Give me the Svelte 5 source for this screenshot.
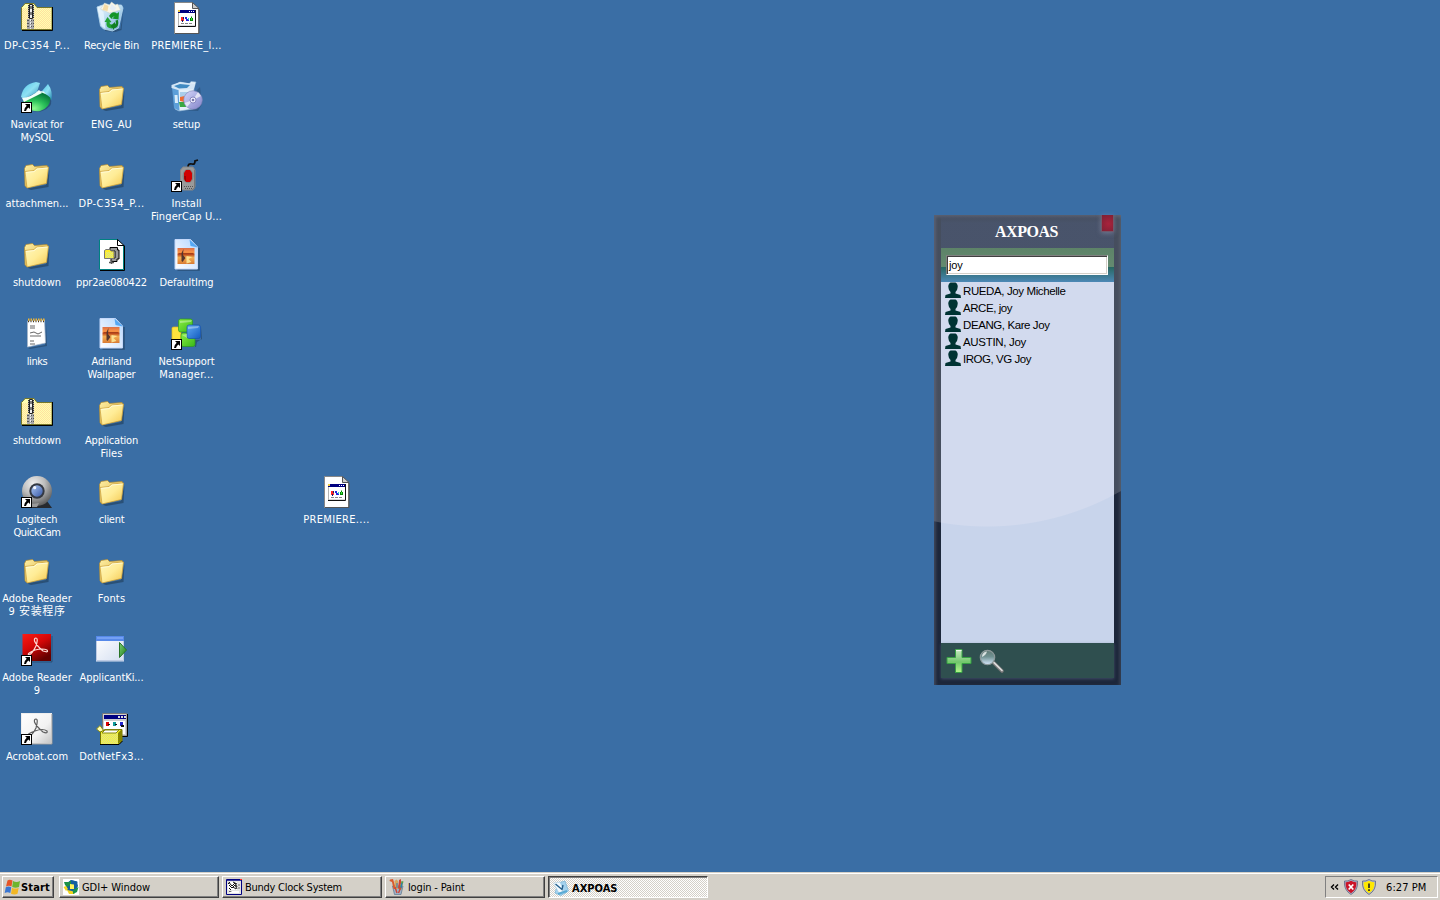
<script>
  const columns = [
    [
      { icon: 'zip', lines: [['DP-C354_P...', 66]] },
      { icon: 'navicat', lines: [['Navicat for', 53], ['MySQL', 33]], shortcut: true },
      { icon: 'folder', lines: [['attachmen...', 63]] },
      { icon: 'folder', lines: [['shutdown', 48]] },
      { icon: 'notes', lines: [['links', 20.5]] },
      { icon: 'zip', lines: [['shutdown', 48]] },
      { icon: 'webcam', lines: [['Logitech', 41], ['QuickCam', 47]], shortcut: true },
      { icon: 'folder', lines: [['Adobe Reader', 69.5], ['9 安装程序', 57]] },
      { icon: 'reader', lines: [['Adobe Reader', 69.5], ['9', 6]], shortcut: true },
      { icon: 'acrobat', lines: [['Acrobat.com', 62]], shortcut: true }
    ],
    [
      { icon: 'bin', lines: [['Recycle Bin', 55]] },
      { icon: 'folder', lines: [['ENG_AU', 41]] },
      { icon: 'folder', lines: [['DP-C354_P...', 66]] },
      { icon: 'archive', lines: [['ppr2ae080422', 71]] },
      { icon: 'image', lines: [['Adriland', 40], ['Wallpaper', 48]] },
      { icon: 'folder', lines: [['Application', 53], ['Files', 22]] },
      { icon: 'folder', lines: [['client', 25.5]] },
      { icon: 'folder', lines: [['Fonts', 27.5]] },
      { icon: 'app', lines: [['ApplicantKi...', 64]] },
      { icon: 'package', lines: [['DotNetFx3...', 64.5]] }
    ],
    [
      { icon: 'ini', lines: [['PREMIERE_l...', 70.5]] },
      { icon: 'setup', lines: [['setup', 27.5]] },
      { icon: 'finger', lines: [['Install', 30], ['FingerCap U...', 71]], shortcut: true },
      { icon: 'image', lines: [['DefaultImg', 54]] },
      { icon: 'blocks', lines: [['NetSupport', 56], ['Manager...', 54.5]], shortcut: true }
    ]
  ];
  const loose = { icon: 'ini', lines: [['PREMIERE....', 66.5]] };
  const people = [
    ['RUEDA, Joy Michelle', 102.5],
    ['ARCE, joy', 49],
    ['DEANG, Kare Joy', 86.5],
    ['AUSTIN, Joy', 63],
    ['IROG, VG Joy', 68]
  ];
  const tasks = [
    { icon: 'gdi', label: 'GDI+ Window', w: 68 },
    { icon: 'clock', label: 'Bundy Clock System', w: 97 },
    { icon: 'paint', label: 'login - Paint', w: 56.5 },
    { icon: 'axpoas', label: 'AXPOAS', w: 45.5, active: true }
  ];

  // Tracks the text so its run is exactly `width` pixels wide.
  function fit(node, width) {
    const apply = () => {
      node.style.letterSpacing = '0px';
      const natural = node.getBoundingClientRect().width;
      const n = [...node.textContent].length;
      if (n > 1) node.style.letterSpacing = `${(width - natural) / n}px`;
    };
    apply();
    document.fonts?.ready.then(apply);
  }
</script>

{#snippet glyph(name)}
  {#if name === 'folder'}
    <g transform="translate(-1 0)">
      <path d="M7 28.500 26 25 29.500 9 28.500 27 11 30Z" fill="#123" opacity=".4" />
      <path d="M4.500 8.500 6 5.500 12.500 4.500 14.500 6.500 27 5.500 28 7 26 23 7 27.500 5 26Z" fill="url(#fold2)" stroke="#b58b2c" stroke-width=".7" />
      <path d="M5 11.500 14 10.500 16.500 8 28.500 7 26.500 23.500 7 28Z" fill="url(#fold)" stroke="#c99c37" stroke-width=".7" />
      <path d="M6 12.500 14.500 11.500 17 9 27.500 8" fill="none" stroke="#fffbd8" stroke-width=".9" />
    </g>
  {:else if name === 'zip'}
    <path d="M.500 5.500 2.500 3.500 4 1.500H13L16 5.500H31V27.500H.500Z" fill="#ffffb0" stroke="#77772a" />
    <path d="M1 6H30V27H1Z" fill="url(#dither)" />
    <path d="M31.500 5V28.500H1" fill="none" stroke="#000" />
    <path d="M7 3H13V16H7Z" fill="#aaa" /><path d="M7.500 3V16M12.500 3V16" stroke="#333" stroke-dasharray="1 1" />
    <path d="M8.500 2.500H11.500V16.500H8.500Z" fill="#eee" stroke="#222" />
    <path d="M10 4V7M10 10V13" stroke="#111" />
    <path d="M6 17H13V27H6Z" fill="#aaa" />
    <path d="M6 18.500H13M6 21.500H13M6 24.500H13" stroke="#555" stroke-dasharray="2 1" />
    <path d="M9.500 17V27" stroke="#eee" stroke-dasharray="2 1" />
  {:else if name === 'bin'}
    <g transform="translate(-.5 0)">
      <path d="M8 26 25 27 28 7 26 28 20 30 10 29Z" fill="#123" opacity=".35" />
      <path d="M1.500 5 7 3 26 3 27.500 6 23 26 17 29 8 27 5 24Z" fill="url(#glass)" stroke="#b8d9ef" stroke-width=".8" />
      <path d="M5 7 9 1 14 3 16 0 20 3 22 2 25 8 14 11Z" fill="#f8f6e8" stroke="#cfd3c8" stroke-width=".5" />
      <path d="M9 2 13 4 12 9 7 8Z" fill="#f6dba5" /><path d="M16 2 21 6 18 9 14 7Z" fill="#e6eef4" />
      <path d="M2 6 6 24 10 27 8 10Z" fill="#e7f5ff" opacity=".75" />
      <path d="M13.500 14Q17 8 21.500 11.500L23.500 10 23 17.500 16.500 16.500 19 14.500Q17 14 16 17Z" fill="#159527" />
      <path d="M12 15 16 20 14 20.500Q14 23 17 22.500L16.500 26.500Q10 26.500 11 20L9 20Z" fill="#22a435" />
      <path d="M22.500 18Q24 25.500 18.500 26.500L18.500 28 15 24 19.500 20V22.500Q21 21 20 18.500Z" fill="#107f22" />
    </g>
  {:else if name === 'ini'}
    <g transform="translate(-1 0)">
      <path d="M4.500 .500H22L28.500 6.500V31.500H4.500Z" fill="#fff" stroke="#888" />
      <path d="M29 7V31.500H5" fill="none" stroke="#555" /><path d="M22.500 .500V6.500H29Z" fill="#ccc" stroke="#555" />
      <path d="M8 8H25V24H8Z" fill="#fff" /><path d="M8.500 8V24H25" fill="none" stroke="#b5b5b5" /><path d="M8 8H25V11H8Z" fill="#000080" /><path d="M8 8H10V10H8Z" fill="#ec4" />
      <path d="M19 9.500H25" stroke="#fff" stroke-dasharray="1 1" /><path d="M25.500 8V24.500H8" fill="none" stroke="#111" />
      <path d="M11 15H14V19H11Z" fill="#f22" /><path d="M12 18H13V20H12ZM13 15H14V17H13Z" fill="#126" />
      <path d="M15 15H17V17H19V19H16V17H15Z" fill="#22d" /><path d="M18 16H19V18H18Z" fill="#2cc" />
      <path d="M20 16H21V14.500H22V16H23V19H20Z" fill="#080" /><path d="M21 16H22V18H21Z" fill="#4d4" />
      <path d="M11 21.500H22" stroke="#888" stroke-dasharray="3 1" />
    </g>
  {:else if name === 'navicat'}
    <path d="M8 29Q20 34 29 25 32 20 28 16Z" fill="#123" opacity=".35" />
    <path d="M0 16Q2 3 15 1L19 2 16 11 3 18Z" fill="url(#navblue)" />
    <path d="M21 10 27 3Q32 10 30.500 19L23 13Z" fill="url(#navblue)" />
    <path d="M19 10 23 10.500 27 17 21 14Z" fill="#e7fbfb" />
    <path d="M2 20Q11 16 18 11 25 12 29.500 17 29 27 19 30 8 32 2 20Z" fill="url(#navgreen)" />
    <path d="M1 17Q11 16 18 9L21 12Q11 17 3 21Z" fill="#f3fff9" />
  {:else if name === 'setup'}
    <path d="M6 29 27 30 31 23 29 6Z" fill="#123" opacity=".25" />
    <path d="M2 5 9 1 18 3 20 .500 25 1 23 7 22 28 8 30 4 28Z" fill="#e3eff9" stroke="#92b8d8" stroke-width=".6" />
    <path d="M1 6 7.500 8 8.500 30 3 27Z" fill="#5c9fd9" /><path d="M.500 4 9 1 24 3 23 8 7 9 .500 7Z" fill="#d4e6f6" />
    <path d="M3 5 9 3 19 4 16 7 8 7.500Z" fill="#408ac2" /><path d="M3.500 14H6.500L7 22H4Z" fill="#d9edfa" />
    <path d="M9 11H20V16H9Z" fill="#a9cdea" />
    <path d="M9 16 14 15 13 21 9 20Z" fill="#f06b31" /><path d="M8 21 14 21 15 26 9 26Z" fill="#39a844" />
    <circle cx="22" cy="19" r="9.300" fill="url(#disc)" stroke="#7f83b9" stroke-width=".6" />
    <path d="M22 19 27 11 30 15ZM22 19 16 26 13.500 22Z" fill="#fff" opacity=".65" /><circle cx="22" cy="19" r="3" fill="#eef" stroke="#7777b4" stroke-width=".8" /><circle cx="22" cy="19" r="1.300" fill="#77a" />
  {:else if name === 'finger'}
    <path d="M17 7Q17 3 21 4 24 5 24 1L27 0" fill="none" stroke="#101010" stroke-width="1.800" />
    <path d="M9.500 10 12 7H22L24 10V27L22 30H12L9.500 28Z" fill="#9a9a9a" stroke="#868686" />
    <path d="M23.500 10V28L21 30" stroke="#777" fill="none" /><ellipse cx="17" cy="16" rx="5.500" ry="7" fill="#828282" /><path d="M13 13 15 10H19L21 13V19L19 22H15L13 19Z" fill="#d00000" /><path d="M13 16H15V21H14Z" fill="#900" />
    <path d="M13 26.500H22M14 28.500H21" stroke="#555" stroke-dasharray="1 1" />
  {:else if name === 'archive'}
    <g transform="translate(-1 0)">
      <path d="M4.500 .500H22L28.500 6.500V30.500H4.500Z" fill="#fff" stroke="#008080" /><path d="M5 31.500H29.500V6.500" fill="none" stroke="#000" /><path d="M22.500 .500V6.500H29Z" fill="#fff" stroke="#000" />
      <path d="M15 8.500H22.500V11H24V20H22V22.500H16V19H20V12H15Z" fill="#999" stroke="#000" /><path d="M18 13V18" stroke="#000" />
      <path d="M9.500 11.500 11 10.500H15L16 12H19V19.500H9.500Z" fill="#ffed28" stroke="#777" /><path d="M11 13H18V19H11Z" fill="url(#yellow)" /><path d="M14 23.500H19M16.500 21V25" stroke="#555" stroke-width="1.500" />
    </g>
  {:else if name === 'image'}
    <g transform="translate(-.5 0)">
      <path d="M7 31H28.500V9" fill="none" stroke="#123" stroke-width="1.500" opacity=".4" /><path d="M4.500 .500H20L27 8V30H4.500Z" fill="url(#page)" stroke="#c4d8fa" />
      <path d="M19 .500 27.500 8.500 20 7Z" fill="#55a8f5" /><path d="M7 9H24V25H7Z" fill="url(#sunset)" />
      <path d="M8 14.500H23" stroke="#a8401a" stroke-width="1.200" /><path d="M16 17 22 18 18 20 21 23 16 24.500Z" fill="#ffec9c" opacity=".85" /><path d="M11 22V14L13 10 12.500 16 15 19 12 23Z" fill="#56362d" />
    </g>
  {:else if name === 'notes'}
    <g transform="translate(-1 0)">
      <path d="M8 30 25 27 26 5 27 28 10 31Z" fill="#123" opacity=".35" /><path d="M7.500 3 24.500 2 25.500 25 7.500 29Z" fill="#fff" stroke="#a8b6c8" stroke-width=".7" />
      <path d="M8 3H25" stroke="#3f3525" stroke-width="2.500" stroke-dasharray="1 1.500" /><path d="M8 1.700H25" stroke="#edb539" stroke-width="2.200" stroke-dasharray="1.500 1" />
      <path d="M10 8H15M10 10H15M10 15 14 14 18 16 22 14M10 18H21M10 23H14M10 26H15" fill="none" stroke="#555" stroke-width=".9" />
    </g>
  {:else if name === 'blocks'}
    <path d="M1 10Q1 9 3 9H10V22H1Z" fill="#ffe33d" stroke="#e0b81b" stroke-width=".7" /><path d="M12 29H24V22H30V9L31 21 26 24 25 29Z" fill="#123" opacity=".35" />
    <g stroke-width=".7"><rect x="7.500" y="1" width="14" height="13" rx="2" fill="url(#blockg)" stroke="#2f991c" /><rect x="10" y="15" width="14" height="13.500" rx="2" fill="url(#blockg)" stroke="#2f991c" /><rect x="16" y="7" width="13.500" height="13.500" rx="2" fill="url(#blockb)" stroke="#1953aa" /></g>
    <path d="M9 3 21 2 20 4 9 5ZM17 9 28 8 27 10 17 11ZM11 17 16 16V20Z" fill="#fff" opacity=".35" />
  {:else if name === 'webcam'}
    <path d="M8 32 17 25 26 25 31 32Z" fill="#26292e" /><circle cx="16" cy="15" r="15" fill="url(#cam)" /><path d="M4 26Q10 29 18 27L16 31H7Z" fill="#999" /><circle cx="16" cy="15" r="7.700" fill="#343943" /><circle cx="16" cy="15" r="5.700" fill="url(#lens)" /><circle cx="13.700" cy="11.700" r="1.600" fill="#f1f6ff" />
  {:else if name === 'reader' || name === 'acrobat'}
    {#if name === 'reader'}<path d="M3 28H31V2" fill="none" stroke="#123" opacity=".4" /><rect x="1.500" y="0" width="28.500" height="27" fill="url(#red)" />{:else}<rect x=".500" y=".500" width="30" height="30" fill="url(#silver)" stroke="#eee" /><path d="M31 1V31H1" fill="none" stroke="#999" />{/if}
    <path d={name === 'reader' ? 'M15 4Q17.500 4 15 12 11 20 8 21 5 20 14 16 22 14 26 16 28 19 22 17 15 11 13.500 7 13 4 15 4Z' : 'M15 6Q17.500 6 15 15 11 23 8 23 5 21 14 18 22 15 26 18 27 21 22 19 15 13 13.500 9 13 6 15 6Z'} fill="none" stroke={name === 'reader' ? '#ffd9d4' : '#5d5d5d'} stroke-width="1.200" />
  {:else if name === 'app'}
    <path d="M0 2.500H28V27.500H0Z" fill="url(#win)" /><path d="M0 2H28V7H0Z" fill="#5689e9" /><path d="M1 4H27" stroke="#93b8ff" /><path d="M.500 7V26.500H27.500V7" fill="none" stroke="#bdcbe4" /><path d="M23.500 8.500 30.500 16 23.500 23.500Z" fill="url(#play)" stroke="#287426" />
  {:else if name === 'package'}
    <path d="M6.500 .500H31V23H6.500Z" fill="#d0d0d0" stroke="#777" /><path d="M8 2H30V6H8Z" fill="#000080" /><path d="M22 4H30" stroke="#ddd" stroke-width="2" stroke-dasharray="2 1" /><path d="M8 8H29V21H8Z" fill="#fff" /><path d="M31.500 1V23.500H25" fill="none" stroke="#000" />
    <path d="M10 9H13V13H10Z" fill="#d00" /><path d="M17 9H20V13H17Z" fill="#199" /><path d="M24 9H27V13H24Z" fill="#22c" /><path d="M12 11H14V12H12ZM19 11H21V12H19ZM25 12H28V14H25ZM10 14H13M17 14H20" fill="#111" />
    <path d="M.500 16 4 12.500 8 18 4 19Z" fill="#ffffb0" stroke="#888811" /><path d="M4.500 19 9 16.500H26V28L23 31H4.500Z" fill="#eded23" stroke="#777700" /><path d="M5 20H22V31H5Z" fill="url(#yellow)" /><path d="M9 17H23L20 20H6Z" fill="#fff" stroke="#888811" /><path d="M22 20 26 16V28L22 31Z" fill="#858500" /><path d="M4 31.500H23L26.500 28" stroke="#000" fill="none" />
  {/if}
{/snippet}

{#snippet shortcut(item)}
  <div class="item">
    <svg class="icon" viewBox="0 0 32 32" width="32" height="32">
      {@render glyph(item.icon)}
      {#if item.shortcut}
        <rect x=".500" y="21.500" width="10" height="10" fill="#fff" stroke="#000" />
        <path d="M4 23H9V28L7.500 26.500Q5.500 27.500 5 30H3Q3 27 5.700 24.700Z" fill="#000" />
      {/if}
    </svg>
    <div class="label">
      {#each item.lines as [text, w]}
        <div class="line"><span use:fit={w}>{text}</span></div>
      {/each}
    </div>
  </div>
{/snippet}

<svg class="defs" width="0" height="0" aria-hidden="true">
  <defs>
    <linearGradient id="fold" x1="0" y1="0" x2="1" y2="1"><stop stop-color="#fff8bd" /><stop offset=".5" stop-color="#ffec96" /><stop offset="1" stop-color="#f4c850" /></linearGradient>
    <linearGradient id="fold2" x1="0" y1="0" x2="1" y2="1"><stop stop-color="#fff0a4" /><stop offset="1" stop-color="#d7a938" /></linearGradient>
    <linearGradient id="glass" x1="0" y1="0" x2="1" y2="1"><stop stop-color="#eff8ff" /><stop offset=".5" stop-color="#b3d8f1" /><stop offset="1" stop-color="#6da3cf" /></linearGradient>
    <linearGradient id="navblue" x1="0" y1="0" x2="1" y2="1"><stop stop-color="#50c6ea" /><stop offset=".5" stop-color="#8fe1f3" /><stop offset="1" stop-color="#2385af" /></linearGradient>
    <radialGradient id="navgreen" cx=".4" cy=".85" r=".8"><stop stop-color="#8dfb8f" /><stop offset=".5" stop-color="#2cc25a" /><stop offset="1" stop-color="#067a3d" /></radialGradient>
    <linearGradient id="disc" x1="0" y1="0" x2="1" y2="1"><stop stop-color="#d6d5fb" /><stop offset=".5" stop-color="#aaaee2" /><stop offset="1" stop-color="#8381c9" /></linearGradient>
    <linearGradient id="page" x1="1" y1="0" x2="0" y2="1"><stop stop-color="#b1d7ff" /><stop offset=".6" stop-color="#e4efff" /><stop offset="1" stop-color="#fff" /></linearGradient>
    <linearGradient id="sunset" x1="0" y1="0" x2="0" y2="1"><stop stop-color="#db6e48" /><stop offset=".3" stop-color="#ff9a45" /><stop offset=".4" stop-color="#bd4a1c" /><stop offset=".6" stop-color="#f4ae51" /><stop offset="1" stop-color="#d87a33" /></linearGradient>
    <linearGradient id="blockg" x1="0" y1="0" x2="1" y2="1"><stop stop-color="#8cee45" /><stop offset="1" stop-color="#38b816" /></linearGradient>
    <linearGradient id="blockb" x1="0" y1="0" x2="1" y2="1"><stop stop-color="#60aaf3" /><stop offset="1" stop-color="#135bc1" /></linearGradient>
    <radialGradient id="cam" cx=".38" cy=".25" r=".75"><stop stop-color="#eee" /><stop offset=".5" stop-color="#bdbdbd" /><stop offset="1" stop-color="#616161" /></radialGradient>
    <linearGradient id="lens" x1="0" y1="0" x2="1" y2="1"><stop stop-color="#abc6f3" /><stop offset="1" stop-color="#3859a7" /></linearGradient>
    <linearGradient id="red" x1="0" y1="0" x2=".6" y2="1"><stop stop-color="#fb1b15" /><stop offset=".5" stop-color="#d40707" /><stop offset="1" stop-color="#650000" /></linearGradient>
    <linearGradient id="silver" x1="0" y1="0" x2="1" y2="1"><stop stop-color="#fff" /><stop offset=".6" stop-color="#f2f2f2" /><stop offset="1" stop-color="#c4c4c4" /></linearGradient>
    <linearGradient id="win" x1="0" y1="0" x2="1" y2="1"><stop stop-color="#fff" /><stop offset="1" stop-color="#d3def1" /></linearGradient>
    <linearGradient id="play" x1="0" y1="0" x2="1" y2="1"><stop stop-color="#7bd073" /><stop offset="1" stop-color="#1c7a1a" /></linearGradient>
    <linearGradient id="plus" x1="0" y1="0" x2="0" y2="1"><stop stop-color="#c4e7c0" /><stop offset=".3" stop-color="#9bd795" /><stop offset=".55" stop-color="#71c76b" /><stop offset="1" stop-color="#b4f58a" /></linearGradient>
    <linearGradient id="mag" x1="0" y1="0" x2="0" y2="1"><stop stop-color="#5f7974" /><stop offset=".45" stop-color="#719293" /><stop offset="1" stop-color="#d8eaff" /></linearGradient>
    <pattern id="dither" width="2" height="2" patternUnits="userSpaceOnUse"><rect width="2" height="2" fill="#ffffb0" /><path d="M0 0H1V1H0ZM1 1H2V2H1Z" fill="#ffe0a0" /></pattern>
    <pattern id="yellow" width="2" height="2" patternUnits="userSpaceOnUse"><rect width="2" height="2" fill="#ffff28" /><path d="M0 0H1V1H0ZM1 1H2V2H1Z" fill="#d5d59b" /></pattern>
  </defs>
</svg>

<div class="screen">
  <main class="desktop">
    {#each columns as column}
      <div class="column">
        {#each column as item}{@render shortcut(item)}{/each}
      </div>
    {/each}

    <div class="loose">{@render shortcut(loose)}</div>

    <section class="window">
      <header><span use:fit={63}>AXPOAS</span></header>
      <button class="close" aria-label="Close"></button>
      <div class="search"><div class="input"><span use:fit={13.5}>joy</span></div></div>
      <ul class="people">
        {#each people as [name, w]}
          <li>
            <svg width="16" height="17" viewBox="0 0 16 17"><path d="M5.500 .500H10.500Q13.500 2.500 12.500 6 12.500 8 10.500 10V11.500L15.500 13 16 16H0L.500 13 5.500 11.500V10Q3.500 8 3.500 6 2.500 2.500 5.500 .500Z" fill="#003333" /></svg>
            <span use:fit={w}>{name}</span>
          </li>
        {/each}
      </ul>
      <footer>
        <svg width="26" height="26" viewBox="0 0 26 26"><path d="M9.500 1.500H16V9.500H25V15.500H16V24.500H9.500V15.500H1V9.500H9.500Z" fill="url(#plus)" stroke="#37a044" /><path d="M10 2.500H15.500" stroke="#eef8ec" stroke-width="1.200" /></svg>
        <svg width="26" height="26" viewBox="0 0 26 26"><path d="M15 15 23 23" stroke="#777" stroke-width="3.600" stroke-linecap="round" /><path d="M15 14.700 23 22.500" stroke="#ddd" stroke-width="1.700" stroke-linecap="round" /><circle cx="8.500" cy="9.500" r="7.200" fill="url(#mag)" stroke="#8d999b" stroke-width="1.200" /><path d="M3 9Q3 4 8 3.500 7 7 3 9Z" fill="#fff" opacity=".75" /></svg>
      </footer>
    </section>
  </main>

  <nav class="taskbar">
    <div class="start">
      <svg width="17" height="16" viewBox="0 0 16 16"><path d="M3 1.500Q5 0 8 1.500L7 7.500Q4.500 6 1.500 7.500Z" fill="#e65526" /><path d="M8.500 2Q12 4 15.500 2L14.500 8Q11 9.500 7.700 8Z" fill="#6eb52d" /><path d="M1.300 8.200Q4 7 6.800 8.200L5.800 14Q3 12.500 .200 14Z" fill="#3976d2" /><path d="M7.500 8.700Q11 10.500 14.200 8.700L13 14.800Q10 16 6.500 14.700Z" fill="#f2b724" /></svg>
      <b><span use:fit={29}>Start</span></b>
    </div>
    <div class="tasks">
      {#each tasks as t}
        <div class="task" class:active={t.active}>
          <svg width="16" height="16" viewBox="0 0 16 16">
            {#if t.icon === 'gdi'}
              <path d="M0 0H16V16H0Z" fill="#fff" />
              <path d="M4 4 8 1 14 2.500 15 7 13 11 8 13.500 4 11 3 7Z" fill="#14609f" />
              <path d="M1 3 6 3 8 1.500 8 6 4 8 2 6Z" fill="#1b9048" /><path d="M7 1 12 2 15 3 12 5Z" fill="#14609f" />
              <path d="M7 5 11 5.500 11 10 7 10Z" fill="#fff35a" /><path d="M.500 8 3 7 5 10 3 12Z" fill="#f2d51c" /><path d="M4 11 9 12 12 15 6 15Z" fill="#f2d51c" />
              <path d="M10 11 15.500 8 14 13 10 15Z" fill="#18934a" />
            {:else if t.icon === 'clock'}
              <path d="M.500 .500H15.500V15.500H.500Z" fill="#e4e4e4" stroke="#000080" /><path d="M1 1H15" stroke="#000080" stroke-width="1.500" /><path d="M14 0H16V1H14Z" fill="#f22" /><path d="M2 3H11V11H2Z" fill="#fff" /><path d="M3 3.500 6 7 9 4 11 8M3 6 6 9 9 6 11 10M3 9 5 11M7 3 11 5M7 8 10 10M2 5 4 3" fill="none" stroke="#111" /><path d="M12 6H14M12 9H14M3 12.500H8" stroke="#666" /><path d="M3 14 6 12H13V14Z" fill="#fff" />
            {:else if t.icon === 'paint'}
              <path d="M3.500 7H14L12 15.500H5.500Z" fill="#9bb3c9" stroke="#5b7389" stroke-width=".7" />
              <path d="M4.500 10 3 3 .500 2 1 .500 4 0 7 10Z" fill="#d95a2c" /><path d="M6 10 5.500 2 7.500 .500 9 2V10Z" fill="#d6a85e" />
              <path d="M9 9 10 1 12 0 12 4 10.500 11Z" fill="#cf4435" /><path d="M10.500 10 12.500 2 14.500 2.500 12 11Z" fill="#569b4a" />
              <path d="M6 8 8 14M12 8 9.500 14" stroke="#cf4435" stroke-width="1.400" /><path d="M13 4 12 9M8 4V9" stroke="#2875c4" />
            {:else}
              <path d="M5 3 12 1 15.500 11 8 15.500 2 13Z" fill="#a4d2ee" stroke="#78b4d7" stroke-width=".7" /><path d="M.500 3 7 2 10.500 11 6 13Z" fill="#f4fbff" stroke="#a8cfe4" stroke-width=".5" /><path d="M2.500 4 9 9.500 10 5" fill="none" stroke="#245f8c" stroke-width="1.400" /><path d="M5 14 14 11" stroke="#5aabd5" stroke-width="2" />
            {/if}
          </svg>
          <span use:fit={t.w}>{t.label}</span>
        </div>
      {/each}
    </div>
    <div class="tray">
      <svg class="chev" width="9" height="8" viewBox="0 0 9 8"><path d="M4 1.500 1.500 4 4 6.500M8 1.500 5.500 4 8 6.500" fill="none" stroke="#000" stroke-width="1.400" /></svg>
      <svg class="shield" width="14" height="16" viewBox="0 0 14 16"><path d="M7 .500Q10 2.500 13.500 2 14.500 11 7 15.500 -.500 11 .500 2 4 2.500 7 .500Z" fill="#aeb6cc" stroke="#5f6784" stroke-width=".8" /><path d="M7 1.800Q9.500 3.400 12.400 3.200 13 10.500 7 14.200 1 10.500 1.600 3.200 4.500 3.400 7 1.800Z" fill="#cb1428" /><path d="M4.700 5.500 9.300 10.500M9.300 5.500 4.700 10.500" stroke="#fff" stroke-width="1.700" /></svg>
      <svg class="shield" width="14" height="16" viewBox="0 0 14 16"><path d="M7 .500Q10 2.500 13.500 2 14.500 11 7 15.500 -.500 11 .500 2 4 2.500 7 .500Z" fill="#aeb6cc" stroke="#5f6784" stroke-width=".8" /><path d="M7 1.800Q9.500 3.400 12.400 3.200 13 10.500 7 14.200 1 10.500 1.600 3.200 4.500 3.400 7 1.800Z" fill="#ffe800" /><path d="M7 4.500V9M7 10.300V12" stroke="#222" stroke-width="1.600" /></svg>
      <time><span use:fit={40.5}>6:27 PM</span></time>
    </div>
  </nav>
</div>

<style>
  :global(body) { margin: 0; }
  .defs { position: absolute; }
  .screen {
    width: 1440px; height: 900px; overflow: hidden;
    display: flex; flex-direction: column;
    background: #3a6ea5;
    font: 11px/13px "DejaVu Sans Condensed", "DejaVu Sans", "Noto Sans CJK SC", sans-serif;
    font-stretch: condensed;
  }
  span { display: inline-block; white-space: pre; }
  .desktop { position: relative; flex: 1; display: flex; align-items: flex-start; }
  .column { display: flex; flex-direction: column; width: 75px; }
  .item { width: 75px; height: 79px; padding-top: 2px; box-sizing: border-box; color: #fff; }
  .icon { display: block; margin-left: 21px; overflow: visible; }
  .label { margin: 5px -5px 0 -6px; text-align: center; }
  .line { height: 13px; line-height: 13px; white-space: nowrap; }
  .loose { position: absolute; left: 300px; top: 474px; }
  .column:nth-child(n + 2) .label, .loose .label { margin: 5px -5px 0 -7px; }

  .window {
    position: absolute; left: 934px; top: 215px; width: 187px; height: 470px;
    box-sizing: border-box; padding: 0 7px 7px;
    display: flex; flex-direction: column;
    background:
      radial-gradient(circle 271px at 53px 41px, rgba(255, 255, 255, .18) 270px, transparent 271px),
      #1d273b;
    box-shadow: inset 3px 3px 3px -1px rgba(125, 130, 145, .35), inset -3px 0 3px -1px rgba(125, 130, 145, .25);
  }
  header { height: 33px; line-height: 33px; padding-right: 2px; text-align: center; color: #fff; background: linear-gradient(rgba(74, 86, 112, 0), rgba(74, 86, 112, .7) 8px); font-family: "Liberation Serif", serif; font-weight: bold; font-size: 16px; }
  .close { position: absolute; right: 7px; top: 0; width: 13px; height: 17px; padding: 0; border: 1px solid #71596b; border-top: 0; border-radius: 0; background: radial-gradient(circle at 60% 55%, #a8233c, #7c2034); box-shadow: 0 1px 5px rgba(160, 160, 185, .5); }
  .search { height: 34px; box-sizing: border-box; padding: 7px 6px 6px 5px; background: linear-gradient(#5d8368 0, #648a70 19px, #276760 19px, #4c88b6 34px); }
  .input { height: 20px; box-sizing: border-box; border: 1px solid; border-color: #808080 #fff #fff #808080; box-shadow: inset 1px 1px #404040, inset -1px -1px #d4d0c8; background: #fff; padding: 2px 2px; font: 11px/15px "Liberation Sans", sans-serif; }
  .people {
    flex: 1; margin: 0; padding: 0 4px; list-style: none;
    background:
      radial-gradient(circle 271px at 46px -26px, #d2daee 270px, transparent 271px),
      #c8d4eb;
  }
  .people li { display: flex; align-items: flex-start; height: 17px; gap: 2px; font: 11.500px/18px "Liberation Sans", sans-serif; color: #000; }
  .people svg { flex: none; }
  footer { height: 35px; box-sizing: border-box; padding: 5px; display: flex; gap: 7px; background: #2f4f4f; box-shadow: 0 1px 3px rgba(100, 115, 150, .5); }

  .taskbar { height: 28px; box-sizing: border-box; padding: 4px 2px 2px; display: flex; background: #d4d0c8; box-shadow: inset 0 1px #d4d0c8, inset 0 2px #fff; color: #000; }
  .start, .task {
    height: 22px; box-sizing: border-box; display: flex; align-items: center;
    border: 1px solid; border-color: #fff #404040 #404040 #fff; box-shadow: inset -1px -1px #808080;
  }
  .start { width: 52px; padding-left: 1px; margin-right: 5px; }
  .tasks { display: flex; gap: 3px; flex: 1; }
  .task { width: 160px; padding-left: 3px; gap: 3px; }
  .task.active {
    border-color: #404040 #fff #fff #404040; box-shadow: inset 1px 1px #808080; font-weight: bold;
    background: repeating-conic-gradient(#fff 0 25%, #d4d0c8 0 50%) 0 0 / 2px 2px;
    padding-top: 2px; padding-left: 4px;
  }
  .tray { width: 113px; height: 22px; box-sizing: border-box; border: 1px solid; border-color: #808080 #fff #fff #808080; display: flex; align-items: center; padding-left: 4px; }
  .shield { margin-left: 5px; }
  .shield + .shield { margin-left: 4px; }
  time { margin-left: 10px; }
</style>
